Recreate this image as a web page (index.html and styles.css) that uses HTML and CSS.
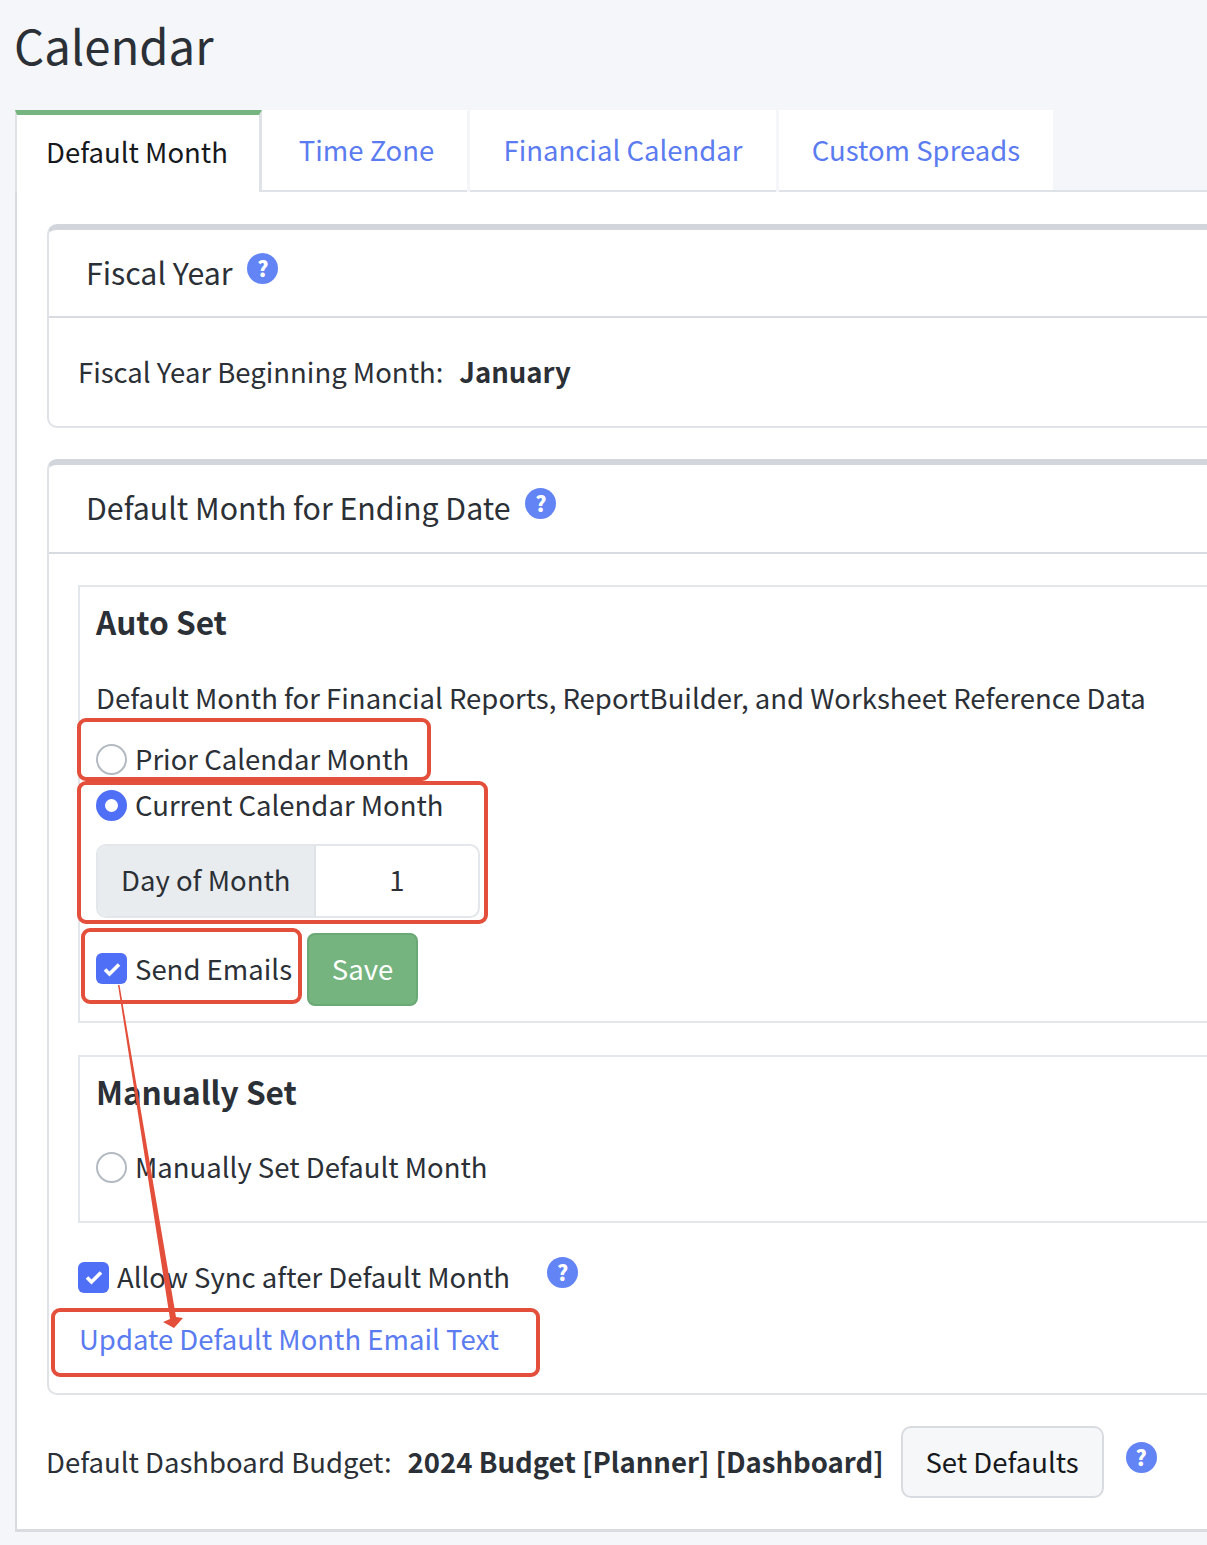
FILE: index.html
```html
<!DOCTYPE html>
<html lang="en">
<head>
    <meta charset="UTF-8">
    <meta name="viewport" content="width=device-width, initial-scale=1.0">
    <title>Calendar</title>
    <link rel="stylesheet" href="styles.css">
</head>
<body>
    <h1 class="page-title">Calendar</h1>

    <div class="tabs">
        <div class="tab active">Default Month</div>
        <a class="tab tab-time">Time Zone</a>
        <a class="tab tab-fin">Financial Calendar</a>
        <a class="tab tab-spreads">Custom Spreads</a>
        <div class="tab-rest"></div>
    </div>

    <div class="panel">
        <div class="card card-fiscal">
            <div class="card-header">Fiscal Year <span class="help">?</span></div>
            <div class="card-body fiscal-body">
                <span>Fiscal Year Beginning Month:</span><b class="value">January</b>
            </div>
        </div>

        <div class="card card-default">
            <div class="card-header">Default Month for Ending Date <span class="help">?</span></div>
            <div class="card-body default-body">
                <div class="box box-auto">
                    <h3 class="box-title">Auto Set</h3>
                    <p class="box-text">Default Month for Financial Reports, ReportBuilder, and Worksheet Reference Data</p>
                    <div class="option option-prior"><span class="radio"></span>Prior Calendar Month</div>
                    <div class="option option-current"><span class="radio checked"></span>Current Calendar Month</div>
                    <div class="input-group">
                        <div class="addon">Day of Month</div>
                        <div class="input-value">1</div>
                    </div>
                    <div class="save-row">
                        <div class="option option-send">
                            <span class="checkbox"><svg viewBox="0 0 20 20" width="20" height="20"><path d="M3 10.5l4.5 4.5L17 5.5" fill="none" stroke="#fff" stroke-width="3.6"/></svg></span>Send Emails
                        </div>
                        <button class="btn-save">Save</button>
                    </div>
                </div>

                <div class="box box-manual">
                    <h3 class="box-title">Manually Set</h3>
                    <div class="option option-manual"><span class="radio"></span>Manually Set Default Month</div>
                </div>

                <div class="option option-sync">
                    <span class="checkbox"><svg viewBox="0 0 20 20" width="20" height="20"><path d="M3 10.5l4.5 4.5L17 5.5" fill="none" stroke="#fff" stroke-width="3.6"/></svg></span>Allow Sync after Default Month
                    <span class="help help-sync">?</span>
                </div>
                <a class="email-link">Update Default Month Email Text</a>
            </div>
        </div>

        <div class="footer-row">
            <span class="footer-text">Default Dashboard Budget:</span><b class="value footer-text">2024 Budget [Planner] [Dashboard]</b>
            <button class="btn-defaults">Set Defaults</button>
            <span class="help help-footer">?</span>
        </div>
    </div>

    <!-- annotations drawn over the screenshot -->
    <div class="mark mark-prior"></div>
    <div class="mark mark-current"></div>
    <div class="mark mark-send"></div>
    <div class="mark mark-link"></div>
    <svg class="arrow" width="1207" height="1545" viewBox="0 0 1207 1545">
        <path d="M118 985L119.5 985L176 1317L183 1318L174 1328L163 1322L170 1319Z" fill="#e34f3a"/>
    </svg>
</body>
</html>
```

FILE: styles.css
```css
* {
    box-sizing: border-box;
}
html, body {
    height: 1545px;
    overflow: hidden;
}
body {
    margin: 0;
    width: 1207px;
    position: relative;
    background-color: #f4f6f9;
    color: #2b3036;
    font-family: "Noto Sans CJK SC", "Noto Sans", sans-serif;
    font-size: 27.5px;
    line-height: 40px;
}
b {
    font-weight: 700;
}
.page-title {
    margin: 0 0 0 14px;
    height: 110px;
    padding-top: 11px;
    font-size: 47.3px;
    line-height: 68px;
    font-weight: 400;
}
.tabs {
    display: flex;
    margin-left: 15px;
    height: 82px;
}
.tab {
    background: #fff;
    color: #5b7bf0;
    border-bottom: 2px solid #dfe2e6;
    padding-top: 19px;
    text-align: center;
    margin-right: 3px;
}
.tab.active {
    width: 247px;
    margin-right: 0;
    padding-right: 2px;
    color: #16191c;
    border-top: 5px solid #76b580;
    border-right: 3px solid #dfe2e6;
    border-bottom: none;
    border-left: 2px solid #dfe2e6;
    padding-top: 16px;
}
.tab-time {
    width: 205px;
    padding-left: 4px;
}
.tab-fin {
    width: 306px;
}
.tab-spreads {
    width: 274px;
    margin-right: 0;
}
.tab-rest {
    flex: 1;
    border-bottom: 2px solid #dfe2e6;
}
.panel {
    width: 1300px;
    margin-left: 15px;
    height: 1340px;
    background: #fff;
    border-left: 2px solid #d8dbe0;
    border-bottom: 3px solid #d8dbe0;
    padding: 32px 30px 0;
}
.card {
    border: 2px solid #dfe2e6;
    border-top: 6px solid #d2d6dc;
    border-radius: 10px;
}
.card-fiscal {
    margin-bottom: 31px;
}
.card-default {
    margin-bottom: 31px;
}
.card-header {
    height: 88px;
    border-bottom: 2px solid #d8dbe0;
    padding: 22px 0 0 37px;
    font-size: 30.3px;
    line-height: 40px;
}
.card-default .card-header {
    height: 89px;
}
.card-body {
    padding: 0 0 0 29px;
}
.fiscal-body {
    height: 108px;
    padding-top: 33px;
}
.value {
    margin-left: 16px;
}
.help {
    display: inline-flex;
    justify-content: center;
    align-items: center;
    width: 31px;
    height: 31px;
    border-radius: 50%;
    margin-left: 8px;
    background: #6384f5;
    color: #fff;
    font-size: 21px;
    font-weight: 900;
    line-height: 31px;
    vertical-align: 8px;
}
.default-body {
    height: 839px;
    padding-top: 31px;
}
.box {
    border: 2px solid #e3e6ea;
    padding-left: 16px;
}
.box-auto {
    height: 438px;
}
.box-manual {
    height: 168px;
    margin-top: 32px;
}
.box-title {
    margin: 0;
    padding-top: 14px;
    font-size: 31.6px;
    line-height: 40px;
    font-weight: 700;
}
.box-text {
    margin: 36px 0 0;
}
.option {
    display: flex;
    align-items: center;
}
.option-prior {
    margin-top: 21px;
}
.option-current {
    margin-top: 6px;
}
.option-manual {
    margin-top: 35px;
}
.option-send {
    margin-top: -4px;
}
.radio {
    width: 31px;
    height: 31px;
    margin-top: 2px;
    margin-right: 8px;
    border-radius: 50%;
    border: 2px solid #b4bac2;
    background: #fff;
}
.radio.checked {
    border: 9px solid #4f70f6;
}
.checkbox {
    display: flex;
    justify-content: center;
    align-items: center;
    width: 31px;
    height: 31px;
    margin-top: 2px;
    margin-right: 8px;
    border-radius: 6px;
    background: #4f70f6;
}
.input-group {
    display: flex;
    width: 384px;
    height: 74px;
    margin-top: 20px;
    border: 2px solid #e3e6ea;
    border-radius: 10px;
    overflow: hidden;
}
.addon {
    width: 218px;
    padding-top: 13px;
    padding-left: 23px;
    background: #e9ecef;
    border-right: 2px solid #dfe2e6;
}
.input-value {
    flex: 1;
    padding-top: 13px;
    text-align: center;
}
.save-row {
    display: flex;
    align-items: center;
    gap: 15px;
    margin-top: 15px;
}
.btn-save {
    width: 111px;
    height: 73px;
    padding-bottom: 4px;
    border: 2px solid #6aa975;
    border-radius: 8px;
    background: #75b47f;
    color: #fff;
    font: inherit;
}
.option-sync {
    margin-top: 33px;
}
.help-sync {
    margin-left: 37px;
    margin-top: -8px;
}
.email-link {
    display: block;
    margin-top: 22px;
    padding-left: 1px;
    color: #5b7bf0;
}
.footer-row {
    display: flex;
    align-items: center;
    height: 72px;
    margin-left: -1px;
}
.footer-text {
    margin-top: -2px;
}
.btn-defaults {
    width: 203px;
    height: 72px;
    margin-left: 17px;
    padding-bottom: 4px;
    border: 2px solid #d8dbe0;
    border-radius: 10px;
    background: #f6f7f9;
    color: #16191c;
    font: inherit;
}
.help-footer {
    margin-left: 22px;
    margin-top: -10px;
}
.mark {
    position: absolute;
    border: 4px solid #e34f3a;
    border-radius: 9px;
}
.mark-prior {
    left: 77px;
    top: 718px;
    width: 354px;
    height: 63px;
}
.mark-current {
    left: 77px;
    top: 781px;
    width: 411px;
    height: 143px;
}
.mark-send {
    left: 81px;
    top: 928px;
    width: 221px;
    height: 76px;
}
.mark-link {
    left: 51px;
    top: 1308px;
    width: 489px;
    height: 69px;
}
.arrow {
    position: absolute;
    left: 0;
    top: 0;
    pointer-events: none;
}
```
